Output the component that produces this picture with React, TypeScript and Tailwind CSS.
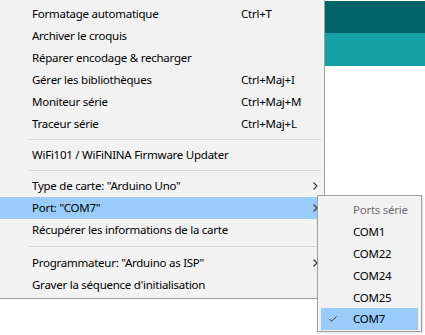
import React from 'react';

type Item =
  | { kind: 'item'; label: string; shortcut?: string; sub?: boolean; active?: boolean }
  | { kind: 'sep'; h: string };

const items: Item[] = [
  { kind: 'item', label: 'Formatage automatique', shortcut: 'Ctrl+T' },
  { kind: 'item', label: 'Archiver le croquis' },
  { kind: 'item', label: 'Réparer encodage & recharger' },
  { kind: 'item', label: 'Gérer les bibliothèques', shortcut: 'Ctrl+Maj+I' },
  { kind: 'item', label: 'Moniteur série', shortcut: 'Ctrl+Maj+M' },
  { kind: 'item', label: 'Traceur série', shortcut: 'Ctrl+Maj+L' },
  { kind: 'sep', h: 'h-[9px]' },
  { kind: 'item', label: 'WiFi101 / WiFiNINA Firmware Updater' },
  { kind: 'sep', h: 'h-[9px]' },
  { kind: 'item', label: 'Type de carte: "Arduino Uno"', sub: true },
  { kind: 'item', label: 'Port: "COM7"', sub: true, active: true },
  { kind: 'item', label: 'Récupérer les informations de la carte' },
  { kind: 'sep', h: 'h-[11px]' },
  { kind: 'item', label: 'Programmateur: "Arduino as ISP"', sub: true },
  { kind: 'item', label: "Graver la séquence d'initialisation" },
];

const ports = ['COM1', 'COM22', 'COM24', 'COM25', 'COM7'];

function Chevron() {
  return (
    <svg width="5" height="8" viewBox="0 0 5 8" className="absolute left-[313px] top-[7px]">
      <polyline points="0.5,0.5 4,4 0.5,7.5" fill="none" stroke="#333" strokeWidth="1.1" />
    </svg>
  );
}

export default function App() {
  return (
    <div
      className="relative w-[425px] h-[335px] bg-white overflow-hidden text-[11.5px] tracking-[-0.25px] text-black"
      style={{ fontFamily: '"Noto Sans", "Segoe UI", sans-serif' }}
    >
      {/* app window behind the menu */}
      <div className="ml-[325px] pt-px">
        <div className="h-[32px] bg-[#006468]" />
        <div className="h-[33px] bg-[#17a1a5]" />
      </div>

      {/* main menu */}
      <div className="absolute left-0 top-0 w-[325px] h-[299px] bg-[#f2f2f2] border-r border-b border-[#a0a0a0] pt-[3px]">
        {items.map((it, i) =>
          it.kind === 'sep' ? (
            <div key={i} className={`${it.h} flex items-center pl-[29px] pr-[3px]`}>
              <div className="h-px w-full bg-[#d7d7d7]" />
            </div>
          ) : (
            <div
              key={i}
              className={`relative h-[22px] flex items-center pl-[32px] leading-none ${it.active ? 'bg-[#99ccf8]' : ''}`}
            >
              <span className="w-[209px] whitespace-nowrap">{it.label}</span>
              {it.shortcut && <span className="whitespace-nowrap">{it.shortcut}</span>}
              {it.sub && <Chevron />}
            </div>
          )
        )}
      </div>

      {/* Port submenu */}
      <div className="absolute left-[317px] top-[195px] w-[105px] h-[137px] bg-[#f2f2f2] border border-[#a0a0a0] pt-[3px] px-[3px] shadow-[1px_1px_2px_rgba(0,0,0,0.15)]">
        <div className="h-[22px] flex items-center pl-[32px] text-[#6d6d6d] leading-none">Ports série</div>
        {ports.map((p) => {
          const sel = p === 'COM7';
          return (
            <div
              key={p}
              className={`relative flex items-center pl-[32px] leading-none ${sel ? 'h-[22px] bg-[#99ccf8]' : 'h-[21.8px]'}`}
            >
              {sel && (
                <svg width="8" height="6" viewBox="0 0 8 6" className="absolute left-[8px] top-[8px]">
                  <polyline points="0.5,3 2.7,5.2 7.5,0.5" fill="none" stroke="#333" strokeWidth="1" />
                </svg>
              )}
              {p}
            </div>
          );
        })}
      </div>
    </div>
  );
}
